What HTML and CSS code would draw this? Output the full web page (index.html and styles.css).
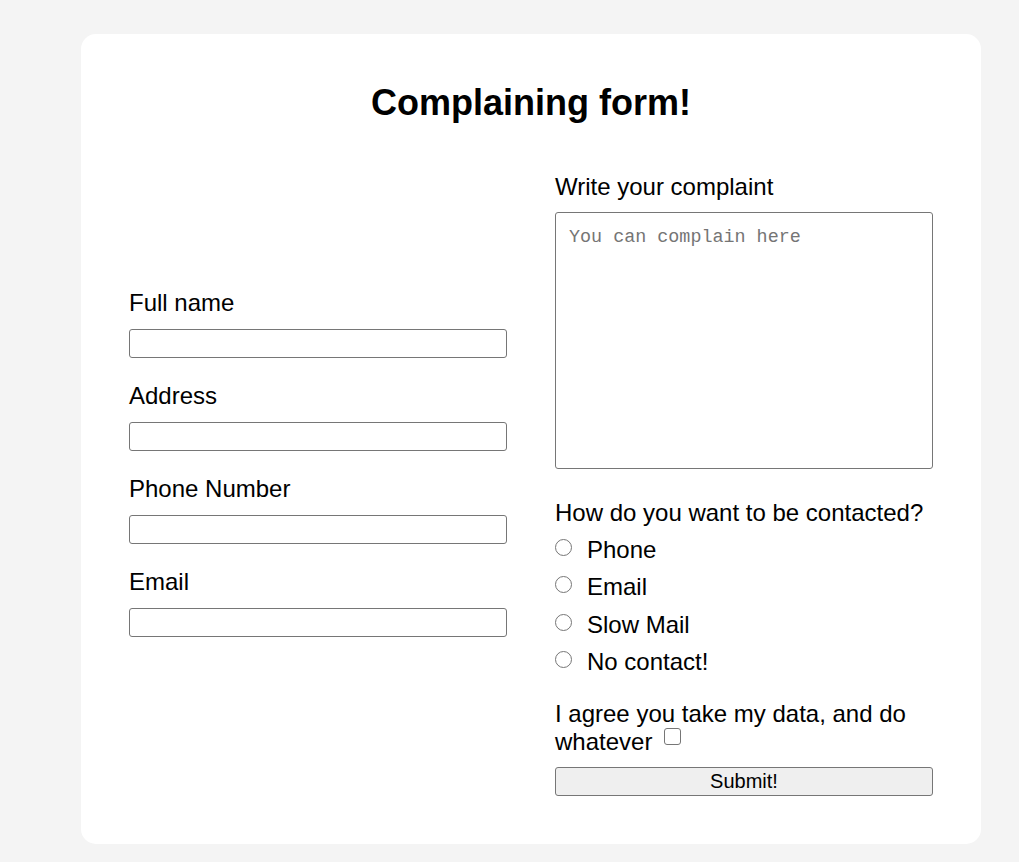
FILE: index.html
```html
<!DOCTYPE html>
<html lang="en">
<head>
<meta charset="utf-8">
<title>Complaining form!</title>
<link rel="stylesheet" href="styles.css">
</head>
<body>
<main class="card">
  <h1 class="title">Complaining form!</h1>
  <form class="form">
    <div class="col col-left">
      <div class="field">
        <label class="label" for="name">Full name</label>
        <input class="input" id="name" type="text">
      </div>
      <div class="field">
        <label class="label" for="address">Address</label>
        <input class="input" id="address" type="text">
      </div>
      <div class="field">
        <label class="label" for="phone">Phone Number</label>
        <input class="input" id="phone" type="text">
      </div>
      <div class="field">
        <label class="label" for="email">Email</label>
        <input class="input" id="email" type="text">
      </div>
    </div>
    <div class="col col-right">
      <label class="label label-complaint" for="complaint">Write your complaint</label>
      <textarea class="textarea" id="complaint" placeholder="You can complain here"></textarea>
      <div class="contact">
        <div class="label">How do you want to be contacted?</div>
        <div class="options">
          <label class="option"><input class="radio" type="radio" name="contact"><span>Phone</span></label>
          <label class="option"><input class="radio" type="radio" name="contact"><span>Email</span></label>
          <label class="option"><input class="radio" type="radio" name="contact"><span>Slow Mail</span></label>
          <label class="option"><input class="radio" type="radio" name="contact"><span>No contact!</span></label>
        </div>
      </div>
      <label class="agree">I agree you take my data, and do whatever <input class="checkbox" type="checkbox"></label>
      <button class="submit" type="submit">Submit!</button>
    </div>
  </form>
</main>
</body>
</html>
```
FILE: styles.css
```css
html, body {
  margin: 0;
  padding: 0;
}

body {
  background: #f4f4f4;
  font-family: "Liberation Sans", Arial, sans-serif;
  color: #000;
  padding: 34px 38px 18px 81px;
}

.card {
  width: 900px;
  box-sizing: border-box;
  background: #fff;
  border-radius: 15px;
  padding: 48px;
}

.title {
  margin: 0;
  font-size: 36px;
  font-weight: bold;
  text-align: center;
  line-height: normal;
}

.form {
  margin-top: 49px;
  display: grid;
  grid-template-columns: 1fr 1fr;
  column-gap: 48px;
}

.col {
  display: flex;
  flex-direction: column;
  min-width: 0;
}

.col-left {
  align-self: center;
  gap: 24px;
  padding-bottom: 43px;
}

.field {
  display: flex;
  flex-direction: column;
  gap: 12px;
}

.label {
  font-size: 24px;
  line-height: normal;
}

.input {
  box-sizing: border-box;
  width: 100%;
  height: 29px;
  margin: 0;
  border: 1px solid #767676;
  border-radius: 3px;
  background: #fff;
  padding: 1px 4px;
  font-family: "Liberation Sans", Arial, sans-serif;
  font-size: 16px;
}

.label-complaint {
  margin-bottom: 11px;
}

.textarea {
  box-sizing: border-box;
  width: 100%;
  height: 257px;
  margin: 0;
  border: 1px solid #767676;
  border-radius: 3px;
  padding: 14px 13px 12px;
  resize: none;
  font-family: "Liberation Mono", "DejaVu Sans Mono", monospace;
  font-size: 18.4px;
  display: block;
}

.textarea::placeholder {
  color: #757575;
}

.contact {
  margin-top: 30px;
  display: flex;
  flex-direction: column;
  gap: 9px;
}

.options {
  display: flex;
  flex-direction: column;
  gap: 9.4px;
}

.option {
  display: flex;
  align-items: center;
  gap: 15px;
  font-size: 24px;
  line-height: normal;
}

.radio {
  appearance: none;
  -webkit-appearance: none;
  box-sizing: border-box;
  width: 17px;
  height: 17px;
  margin: 0 0 5px 0;
  border: 1.5px solid #767676;
  border-radius: 50%;
  background: #fff;
  flex: none;
}

.agree {
  margin-top: 24px;
  font-size: 24px;
  line-height: normal;
  display: block;
}

.checkbox {
  appearance: none;
  -webkit-appearance: none;
  box-sizing: border-box;
  width: 17px;
  height: 17px;
  margin: 0 0 5px 5px;
  border: 1.5px solid #767676;
  border-radius: 3px;
  background: #fff;
  vertical-align: baseline;
}

.submit {
  margin-top: 11px;
  box-sizing: border-box;
  width: 100%;
  height: 29px;
  border: 1px solid #767676;
  border-radius: 3px;
  background: #efefef;
  font-family: "Liberation Sans", Arial, sans-serif;
  font-size: 20px;
  color: #000;
  padding: 0;
}
```
